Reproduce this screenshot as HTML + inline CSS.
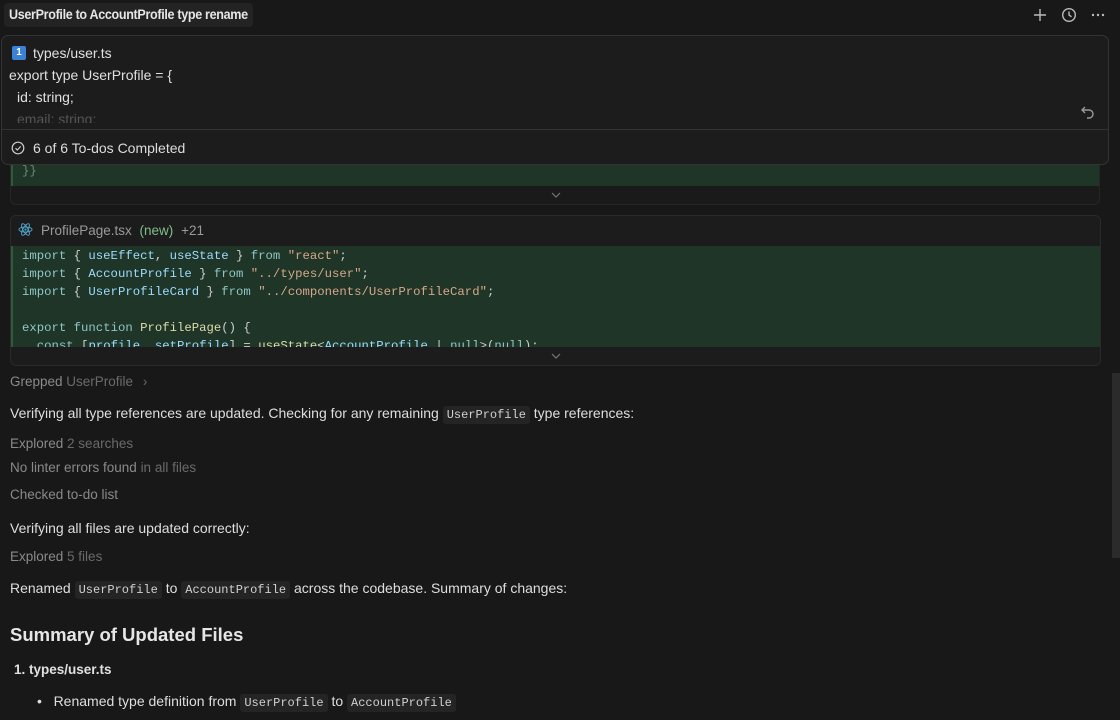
<!DOCTYPE html>
<html><head><meta charset="utf-8"><style>
*{margin:0;padding:0;box-sizing:border-box}
body{width:1120px;height:720px;background:#181818;color:#d4d4d4;font-family:"Liberation Sans",sans-serif;position:relative;overflow:hidden;font-size:14px}
.a{position:absolute;white-space:nowrap}
.gray{color:#8a8a8a;font-size:13.5px}
.dim{color:#6a6a6a}
code{font-family:"Liberation Mono",monospace;font-size:12px;background:#242424;padding:2px 4px;border-radius:3px;color:#d0d0d0}
.code{font-family:"Liberation Mono",monospace;font-size:12.3px;line-height:18px;color:#cfcfcf}
.k{color:#8fc6c6}.v{color:#9cdcfe}.s{color:#d7a88a}.f{color:#dcdcaa}.p{color:#d4d4d4}
</style></head><body>

<div class="a" style="left:4px;top:3px;width:249px;height:24px;background:#232323;border-radius:4px"></div>
<div class="a" style="left:9px;top:7px;font-size:13.5px;font-weight:bold;color:#e6e6e6;letter-spacing:-0.35px;transform:scaleX(0.93);transform-origin:left">UserProfile to AccountProfile type rename</div>

<svg class="a" style="left:1032px;top:7px" width="16" height="16" viewBox="0 0 16 16"><path d="M8 2v12M2 8h12" stroke="#bbb" stroke-width="1.4"/></svg>
<svg class="a" style="left:1061px;top:7px" width="16" height="16" viewBox="0 0 16 16"><circle cx="8" cy="8" r="6.3" fill="none" stroke="#bbb" stroke-width="1.4"/><path d="M8 4.5V8l2.5 1.8" fill="none" stroke="#bbb" stroke-width="1.4"/></svg>
<svg class="a" style="left:1090px;top:7px" width="16" height="16" viewBox="0 0 16 16"><circle cx="3" cy="8" r="1.2" fill="#bbb"/><circle cx="8" cy="8" r="1.2" fill="#bbb"/><circle cx="13" cy="8" r="1.2" fill="#bbb"/></svg>

<div class="a" style="left:10px;top:160px;width:1090px;height:45px;border:1px solid #262626;border-top:none;border-radius:0 0 6px 6px;background:#1a1a1a"></div>
<div class="a" style="left:11px;top:160px;width:1088px;height:26px;background:#1e3527;border-left:2px solid #2f5a3e"></div>
<div class="a code" style="left:22px;top:162px;color:#6a8a74">}}</div>
<svg class="a" style="left:550px;top:190px" width="12" height="10" viewBox="0 0 12 10"><path d="M2 3l4 4 4-4" fill="none" stroke="#777" stroke-width="1.2"/></svg>

<div class="a" style="left:1px;top:35px;width:1108px;height:130px;background:#1c1c1c;border:1px solid #333;border-radius:7px"></div>
<div class="a" style="left:1px;top:129px;width:1108px;height:1px;background:#333"></div>
<div class="a" style="left:12px;top:46px;width:14px;height:14px;background:#3b82d6;border-radius:2px;color:#fff;font-size:10px;font-weight:bold;text-align:center;line-height:14px">1</div>
<div class="a" style="left:33px;top:45px;font-size:14px;color:#e0e0e0">types/user.ts</div>
<div class="a" style="left:9px;top:67px;font-size:14px;color:#e0e0e0">export type UserProfile = {</div>
<div class="a" style="left:17px;top:89px;font-size:14px;color:#e0e0e0">id: string;</div>
<div class="a" style="left:17px;top:111px;font-size:14px;color:#555;height:12px;overflow:hidden">email: string;</div>
<svg class="a" style="left:1080px;top:104px" width="16" height="16" viewBox="0 0 16 16"><path d="M5 3L2 6l3 3M2 6h7a4 4 0 010 8H7" fill="none" stroke="#999" stroke-width="1.4"/></svg>
<svg class="a" style="left:11px;top:141px" width="14" height="14" viewBox="0 0 14 14"><circle cx="7" cy="7" r="5.8" fill="none" stroke="#ccc" stroke-width="1.2"/><path d="M4.5 7.2l1.8 1.8 3.4-3.6" fill="none" stroke="#ccc" stroke-width="1.2"/></svg>
<div class="a" style="left:33px;top:140px;font-size:14px;color:#dcdcdc">6 of 6 To-dos Completed</div>

<div class="a" style="left:10px;top:215px;width:1091px;height:151px;background:#1c1c1c;border:1px solid #2a2a2a;border-radius:6px"></div>
<svg class="a" style="left:18px;top:222px" width="15" height="15" viewBox="0 0 16 16"><g fill="none" stroke="#4fa3c7" stroke-width="1"><ellipse cx="8" cy="8" rx="7" ry="2.7"/><ellipse cx="8" cy="8" rx="7" ry="2.7" transform="rotate(60 8 8)"/><ellipse cx="8" cy="8" rx="7" ry="2.7" transform="rotate(120 8 8)"/></g><circle cx="8" cy="8" r="1.2" fill="#4fa3c7"/></svg>
<div class="a" style="left:41px;top:223px;font-size:13.5px;color:#9a9a9a">ProfilePage.tsx <span style="color:#7fbf8a;margin-left:4px">(new)</span> <span style="color:#9a9a9a;margin-left:4px">+21</span></div>
<div class="a" style="left:11px;top:246px;width:1089px;height:101px;background:#1e3527;border-left:2px solid #2f5a3e;overflow:hidden">
<div class="code" style="padding:1px 0 0 9px">
<div><span class="k">import</span> { <span class="v">useEffect</span>, <span class="v">useState</span> } <span class="k">from</span> <span class="s">"react"</span>;</div>
<div><span class="k">import</span> { <span class="v">AccountProfile</span> } <span class="k">from</span> <span class="s">"../types/user"</span>;</div>
<div><span class="k">import</span> { <span class="v">UserProfileCard</span> } <span class="k">from</span> <span class="s">"../components/UserProfileCard"</span>;</div>
<div>&nbsp;</div>
<div><span class="k">export</span> <span class="k">function</span> <span class="f">ProfilePage</span>() {</div>
<div>&nbsp;&nbsp;<span class="k">const</span> [<span class="v">profile</span>, <span class="v">setProfile</span>] = <span class="f">useState</span>&lt;<span class="v">AccountProfile</span> | <span class="k">null</span>&gt;(<span class="k">null</span>);</div>
</div></div>
<svg class="a" style="left:550px;top:351px" width="12" height="10" viewBox="0 0 12 10"><path d="M2 3l4 4 4-4" fill="none" stroke="#777" stroke-width="1.2"/></svg>

<div class="a" style="left:1112px;top:373px;width:8px;height:185px;background:#2b2b2b"></div>

<div class="a gray" style="left:10px;top:374px">Grepped <span class="dim">UserProfile</span> <span class="dim" style="margin-left:6px">›</span></div>
<div class="a" style="left:10px;top:405px;color:#dedede">Verifying all type references are updated. Checking for any remaining <code>UserProfile</code> type references:</div>
<div class="a gray" style="left:10px;top:436px">Explored <span class="dim">2 searches</span></div>
<div class="a gray" style="left:10px;top:460px">No linter errors found <span class="dim">in all files</span></div>
<div class="a gray" style="left:10px;top:487px">Checked to-do list</div>
<div class="a" style="left:10px;top:520px;color:#dedede">Verifying all files are updated correctly:</div>
<div class="a gray" style="left:10px;top:549px">Explored <span class="dim">5 files</span></div>
<div class="a" style="left:10px;top:580px;color:#dedede">Renamed <code>UserProfile</code> to <code>AccountProfile</code> across the codebase. Summary of changes:</div>
<div class="a" style="left:10px;top:624px;font-size:18.5px;font-weight:bold;color:#e6e6e6">Summary of Updated Files</div>
<div class="a" style="left:14px;top:662px;font-size:13.5px;font-weight:bold;color:#e0e0e0">1. types/user.ts</div>
<div class="a" style="left:37px;top:693px;color:#dedede">•&nbsp;&nbsp;&nbsp;Renamed type definition from <code>UserProfile</code> to <code>AccountProfile</code></div>
</body></html>
